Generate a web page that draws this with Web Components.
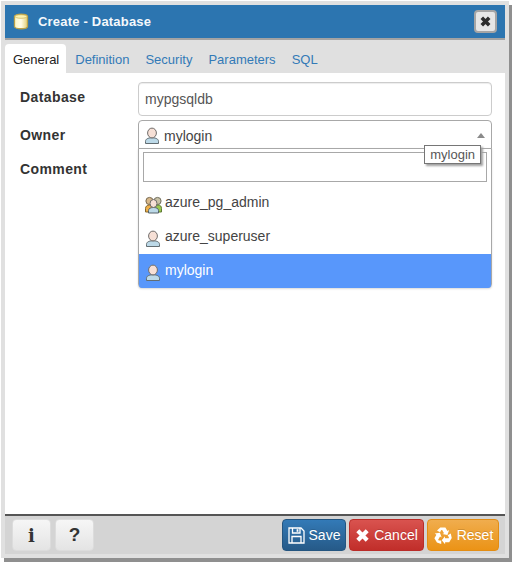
<!DOCTYPE html>
<html>
<head>
<meta charset="utf-8">
<title>Create - Database</title>
<style>
  html, body { margin: 0; padding: 0; background: #fff; }
  body { width: 514px; height: 563px; overflow: hidden; font-family: "Liberation Sans", Arial, sans-serif; }
</style>
</head>
<body>
<db-dialog heading="Create - Database">
  <tab-strip slot="tabs" active="General" tabs="General,Definition,Security,Parameters,SQL"></tab-strip>
  <form-row label="Database"><text-field value="mypgsqldb"></text-field></form-row>
  <form-row label="Owner"><owner-select value="mylogin"></owner-select></form-row>
  <form-row label="Comment" compact></form-row>
  <foot-btn slot="left" kind="plain" icon="info"></foot-btn>
  <foot-btn slot="left" kind="plain" icon="help"></foot-btn>
  <foot-btn slot="right" kind="save" icon="save" label="Save"></foot-btn>
  <foot-btn slot="right" kind="cancel" icon="cancel" label="Cancel"></foot-btn>
  <foot-btn slot="right" kind="reset" icon="reset" label="Reset"></foot-btn>
</db-dialog>

<script>
const userIcon = `
  <svg width="16" height="18" viewBox="0 0 16 18">
    <path d="M1.5 16.5v-2.2c0-2.2 2.4-3.5 6.5-3.5s6.5 1.3 6.5 3.5v2.2z" fill="#bcd9e8" stroke="#626d72"/>
    <ellipse cx="8" cy="6" rx="4.4" ry="4.9" fill="#f7e0d6" stroke="#6f6c6a"/>
  </svg>`;

const groupIcon = `
  <svg width="17" height="18" viewBox="0 0 17 18">
    <circle cx="4.5" cy="5" r="3.6" fill="#d8b88a" stroke="#77684f"/>
    <circle cx="12.5" cy="5" r="3.6" fill="#c9c2a6" stroke="#6f6d5c"/>
    <path d="M.5 16v-3.5c0-2 1.5-3.5 4-3.5s3 2 3 3.5V16z" fill="#f0b04a" stroke="#84682f"/>
    <path d="M9.5 16v-3.5c0-2 1-3.500 3.5-3.500s3.500 1.500 3.500 3.500V16z" fill="#9ac84f" stroke="#5f7a35"/>
    <path d="M3.5 17v-2.500c0-2 2-3 5-3s5 1 5 3V17z" fill="#bcd9e8" stroke="#56636a"/>
    <ellipse cx="8.5" cy="7.5" rx="3.5" ry="4" fill="#f7e0d6" stroke="#6d6a68"/>
  </svg>`;

const dialogTemplate = document.createElement('template');
dialogTemplate.innerHTML = `
  <style>
    :host {
      display: flex;
      flex-direction: column;
      width: 500px;
      height: 549px;
      margin: 1px 0 0 1px;
      padding: 4px;
      background: #e0e0e0;
      box-shadow: 3px 4px 0 0 #8f8f8f;
      font-family: "Liberation Sans", Arial, sans-serif;
      color: #333;
    }
    .head {
      display: flex;
      align-items: center;
      height: 33px;
      flex: none;
      padding: 0 8px;
      background: #2c75b0;
      border-bottom: 2px solid #a3a3a3;
      color: #f4f8fb;
      font-size: 13px;
      font-weight: bold;
    }
    .head svg { margin-right: 9px; }
    .title { flex: 1; letter-spacing: .2px; }
    .close {
      width: 23px;
      height: 23px;
      box-sizing: border-box;
      display: flex;
      align-items: center;
      justify-content: center;
      background: #e6e6e6;
      border: 2px solid #a5a5a5;
      border-radius: 4px;
    }
    .close svg { margin: 0; }
    .body {
      flex: 1;
      display: flex;
      flex-direction: column;
      gap: 4px;
      padding: 9px 13px 0 15px;
      background: #fff;
      position: relative;
    }
    .foot {
      flex: none;
      height: 38px;
      display: flex;
      align-items: center;
      justify-content: space-between;
      padding: 0 6px 0 7px;
      background: #d4d4d4;
      border-top: 2px solid #555;
    }
    .group { display: flex; gap: 3px; }
    .group.left { gap: 4px; }
    ::slotted(foot-btn) { flex: none; }
  </style>
  <div class="head">
    <svg width="16" height="17" viewBox="0 0 16 17">
      <defs><linearGradient id="can" x1="0" x2="1" y1="0" y2="0">
        <stop offset="0" stop-color="#fdf6c4"/><stop offset=".5" stop-color="#fffde8"/><stop offset="1" stop-color="#e2cf76"/>
      </linearGradient></defs>
      <path d="M1.5 3.5c0-3 13-3 13 0v10c0 3-13 3-13 0z" fill="url(#can)" stroke="#b9a14a" stroke-width="1.3"/>
      <ellipse cx="8" cy="3.5" rx="6" ry="1.8" fill="#fdf3b0" stroke="#c9b258" stroke-width=".7"/>
    </svg>
    <span class="title"></span>
    <span class="close">
      <svg width="13" height="13" viewBox="0 0 13 13"><path d="M2.8 2.8l7.4 7.4M10.2 2.8l-7.4 7.4" stroke="#2c2c2c" stroke-width="3.6" fill="none"/></svg>
    </span>
  </div>
  <slot name="tabs"></slot>
  <div class="body"><slot></slot></div>
  <div class="foot">
    <div class="group left"><slot name="left"></slot></div>
    <div class="group"><slot name="right"></slot></div>
  </div>
`;

class DbDialog extends HTMLElement {
  constructor() {
    super();
    this.attachShadow({ mode: 'open' }).appendChild(dialogTemplate.content.cloneNode(true));
  }
  connectedCallback() {
    this.shadowRoot.querySelector('.title').textContent = this.getAttribute('heading');
  }
}
customElements.define('db-dialog', DbDialog);

class TabStrip extends HTMLElement {
  constructor() {
    super();
    this.attachShadow({ mode: 'open' }).innerHTML = `
      <style>
        :host {
          display: flex;
          height: 33px;
          padding: 4px 0 0 0;
          box-sizing: border-box;
          background: #e0e0e0;
          font-size: 13px;
        }
        .row { display: flex; }
        .tab {
          display: flex;
          align-items: center;
          height: 29px;
          padding: 2px 8px 0;
          box-sizing: border-box;
          color: #337ab7;
        }
        .tab.active { background: #fff; color: #222; padding-right: 7px; margin-right: 1px; border-radius: 4px 4px 0 0; }
      </style>
      <div class="row"></div>`;
  }
  connectedCallback() {
    const row = this.shadowRoot.querySelector('.row');
    const active = this.getAttribute('active');
    this.getAttribute('tabs').split(',').forEach(name => {
      const tab = document.createElement('div');
      tab.className = 'tab' + (name === active ? ' active' : '');
      tab.textContent = name;
      row.appendChild(tab);
    });
  }
}
customElements.define('tab-strip', TabStrip);

class FormRow extends HTMLElement {
  constructor() {
    super();
    this.attachShadow({ mode: 'open' }).innerHTML = `
      <style>
        :host {
          display: flex;
          align-items: flex-start;
          font-size: 14px;
        }
        :host([compact]) { margin-top: 1px; }
        label {
          width: 118px;
          flex: none;
          padding-top: 7px;
          font-weight: bold;
          letter-spacing: .4px;
          color: #333;
        }
        .field { flex: 1; }
      </style>
      <label></label>
      <div class="field"><slot></slot></div>`;
  }
  connectedCallback() {
    this.shadowRoot.querySelector('label').textContent = this.getAttribute('label');
  }
}
customElements.define('form-row', FormRow);

class TextField extends HTMLElement {
  constructor() {
    super();
    this.attachShadow({ mode: 'open' }).innerHTML = `
      <style>
        :host {
          display: flex;
          align-items: center;
          height: 34px;
          box-sizing: border-box;
          padding: 0 6px;
          border: 1px solid #ccc;
          border-radius: 4px;
          box-shadow: inset 0 1px 1px rgba(0,0,0,.075);
          color: #555;
          font-size: 14px;
        }
      </style>
      <span></span>`;
  }
  connectedCallback() {
    this.shadowRoot.querySelector('span').textContent = this.getAttribute('value');
  }
}
customElements.define('text-field', TextField);

class OwnerSelect extends HTMLElement {
  constructor() {
    super();
    this.attachShadow({ mode: 'open' }).innerHTML = `
      <style>
        :host {
          display: block;
          position: relative;
          height: 29px;
          font-size: 14px;
          color: #444;
        }
        .box {
          display: flex;
          align-items: center;
          gap: 4px;
          height: 29px;
          box-sizing: border-box;
          padding: 2px 6px 0 5px;
          border: 1px solid #a8a8a8;
          border-radius: 4px 4px 0 0;
          background: #fff;
        }
        .box .name { flex: 1; }
        .arrow {
          width: 0;
          height: 0;
          border: 4px solid transparent;
          border-top: 0;
          border-bottom: 5px solid #8a8a8a;
        }
        .menu {
          position: absolute;
          left: 0;
          right: 0;
          top: 28px;
          height: 140px;
          box-sizing: border-box;
          background: #fff;
          border: 1px solid #a8a8a8;
          border-radius: 0 0 4px 4px;
          box-shadow: 0 1px 2px rgba(0,0,0,.15);
          display: flex;
          flex-direction: column;
          z-index: 1;
        }
        .search {
          height: 30px;
          flex: none;
          box-sizing: border-box;
          margin: 3px 4px;
          border: 1px solid #a8a8a8;
        }
        .opt {
          height: 34px;
          flex: none;
          display: flex;
          align-items: center;
          gap: 4px;
          padding-left: 6px;
          color: #444;
        }
        .opt .name { position: relative; top: -1px; }
        .opt svg { position: relative; top: 2px; }
        .opt.first { margin-top: 1px; gap: 3px; }
        .opt.on { background: #5897fb; color: #fff; border-radius: 0 0 3px 3px; }
        .tip {
          position: absolute;
          top: 25px;
          right: 11px;
          height: 19px;
          box-sizing: border-box;
          padding: 0 5px;
          display: flex;
          align-items: center;
          background: #fff;
          border: 1px solid #767676;
          box-shadow: 2px 2px 2px #a0a0a0;
          color: #575757;
          font-size: 13px;
          z-index: 2;
        }
      </style>
      <div class="box">${userIcon}<span class="name"></span><span class="arrow"></span></div>
      <div class="menu">
        <div class="search"></div>
        <div class="opt first">${groupIcon}<span class="name">azure_pg_admin</span></div>
        <div class="opt">${userIcon}<span class="name">azure_superuser</span></div>
        <div class="opt on">${userIcon}<span class="name">mylogin</span></div>
      </div>
      <div class="tip"></div>`;
  }
  connectedCallback() {
    const value = this.getAttribute('value');
    this.shadowRoot.querySelector('.box .name').textContent = value;
    this.shadowRoot.querySelector('.tip').textContent = value;
  }
}
customElements.define('owner-select', OwnerSelect);

const recycleArm = 'M7.2 1.5h5.3l2.2 3.7 1.8-1-1.900 5.200-5.300-.9 1.800-1-2-3.400-.9.2-1.300 2.300-3.200-1.900z';

const footIcons = {
  info: '<span class="glyph serif">i</span>',
  help: '<span class="glyph">?</span>',
  save: `<svg width="17" height="17" viewBox="0 0 17 17" fill="none" stroke="#fff" stroke-width="1.3">
    <path d="M1 1h12l3 3v12H1z"/><path d="M4.5 1v5H12V1"/><path d="M9.5 2.2v2.600" stroke-width="1.8"/><path d="M4 16V9.5h9V16"/></svg>`,
  cancel: `<svg width="15" height="15" viewBox="0 0 15 15"><path d="M2.8 2.8l9.4 9.4M12.200 2.800l-9.400 9.400" stroke="#fff" stroke-width="4.2"/></svg>`,
  reset: `<svg width="20" height="19" viewBox="0 0 20 20" fill="#fff">
    <path d="${recycleArm}"/>
    <path d="${recycleArm}" transform="rotate(120 10 10.5)"/>
    <path d="${recycleArm}" transform="rotate(240 10 10.5)"/></svg>`
};

class FootBtn extends HTMLElement {
  constructor() {
    super();
    this.attachShadow({ mode: 'open' }).innerHTML = `
      <style>
        :host {
          display: flex;
          align-items: center;
          justify-content: center;
          gap: 4px;
          height: 32px;
          box-sizing: border-box;
          border-radius: 4px;
          font-size: 14px;
          color: #fff;
          text-shadow: 0 -1px 0 rgba(0,0,0,.15);
          border: 1px solid transparent;
        }
        :host([kind=plain]) { width: 39px; background: linear-gradient(#f6f6f6, #e4e4e4); border-color: #dcdcdc; }
        :host([kind=save]) { width: 64px; background: linear-gradient(#337ab7, #265a88); border-color: #245580; }
        :host([kind=cancel]) { width: 75px; background: linear-gradient(#d9534f, #c12e2a); border-color: #b92c28; }
        :host([kind=reset]) { width: 72px; background: linear-gradient(#f0ad4e, #eb9316); border-color: #e38d13; }
        .glyph { font: bold 19px "Liberation Sans", Arial, sans-serif; color: #333; text-shadow: none; }
        .glyph.serif { font: bold 18px "DejaVu Serif", serif; }
      </style>
      <span class="icon"></span><span class="label"></span>`;
  }
  connectedCallback() {
    const icon = this.shadowRoot.querySelector('.icon');
    icon.innerHTML = footIcons[this.getAttribute('icon')];
    icon.style.display = 'flex';
    const label = this.shadowRoot.querySelector('.label');
    label.textContent = this.getAttribute('label') || '';
    if (!label.textContent) label.remove();
  }
}
customElements.define('foot-btn', FootBtn);
</script>
</body>
</html>
